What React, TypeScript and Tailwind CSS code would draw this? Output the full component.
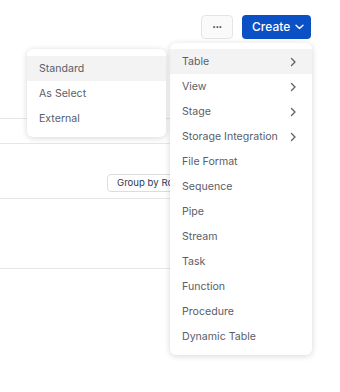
import React from 'react';

const createItems = [
  { label: 'Table', sub: true },
  { label: 'View', sub: true },
  { label: 'Stage', sub: true },
  { label: 'Storage Integration', sub: true },
  { label: 'File Format' },
  { label: 'Sequence' },
  { label: 'Pipe' },
  { label: 'Stream' },
  { label: 'Task' },
  { label: 'Function' },
  { label: 'Procedure' },
  { label: 'Dynamic Table' },
];

const tableKinds = ['Standard', 'As Select', 'External'];

function ChevronRight() {
  return (
    <svg width="8" height="10" viewBox="0 0 8 10" fill="none">
      <path d="M2.5 1.5L6 5L2.5 8.5" stroke="#5f6470" strokeWidth="1.4" strokeLinecap="round" strokeLinejoin="round" />
    </svg>
  );
}

function ChevronDown() {
  return (
    <svg width="9" height="6" viewBox="0 0 9 6" fill="none">
      <path d="M1 1.2L4.5 4.6L8 1.2" stroke="white" strokeWidth="1.4" strokeLinecap="round" strokeLinejoin="round" />
    </svg>
  );
}

export default function App() {
  return (
    <div className="relative w-[340px] h-[392px] overflow-hidden bg-white font-['Inter',sans-serif]">
      {/* toolbar */}
      <header className="flex justify-end items-center gap-[9px] pt-[15px] pr-[29px]">
        <button className="w-[32px] h-[24px] rounded-[4px] border border-[#e3e4e6] bg-[#fafafa] flex items-center justify-center text-[#2a2f3a] text-[11px] font-bold leading-none tracking-[-0.5px]">
          <span className="-mt-[5px]">...</span>
        </button>
        <button className="w-[69px] h-[24px] rounded-[4px] bg-[#0b50c5] flex items-center gap-[5px] pl-[10px] text-white text-[12px] font-medium">
          Create
          <ChevronDown />
        </button>
      </header>

      {/* page content behind the menus */}
      <div className="w-[230px]">
        <div className="h-[79px]" />
        <div className="border-t border-[#e6e6e8] h-[25px]" />
        <div className="border-t border-[#e6e6e8] h-[55px] flex items-end justify-end pb-[6px]">
          <button className="mr-[-30px] w-[153px] h-[18px] rounded-[4px] border border-[#dcdde0] bg-white text-left pl-[9px] text-[9.6px] text-[#2f3a52]">
            Group by Role
          </button>
        </div>
        <div className="border-t border-[#e6e6e8] h-[70px]" />
        <div className="border-t border-[#e6e6e8]" />
      </div>

      {/* Create menu */}
      <div className="absolute left-[170px] top-[43px] w-[142px] rounded-[6px] bg-white py-[6px] shadow-[0_1px_6px_rgba(0,0,0,0.16)]">
        {createItems.map((item, i) => (
          <div
            key={item.label}
            className={
              'h-[25px] flex items-center justify-between pl-[12px] pr-[15px] text-[10.6px] text-[#595e6a] ' +
              (i === 0 ? 'bg-[#f3f3f4]' : '')
            }
          >
            <span>{item.label}</span>
            {item.sub && <ChevronRight />}
          </div>
        ))}
      </div>

      {/* Table submenu */}
      <div className="absolute left-[27px] top-[49px] w-[139px] rounded-[6px] bg-white pt-[7px] pb-[6px] shadow-[0_1px_6px_rgba(0,0,0,0.16)]">
        {tableKinds.map((k, i) => (
          <div
            key={k}
            className={
              'h-[25px] flex items-center pl-[12px] text-[10.6px] text-[#595e6a] ' +
              (i === 0 ? 'bg-[#f3f3f4]' : '')
            }
          >
            {k}
          </div>
        ))}
      </div>
    </div>
  );
}
